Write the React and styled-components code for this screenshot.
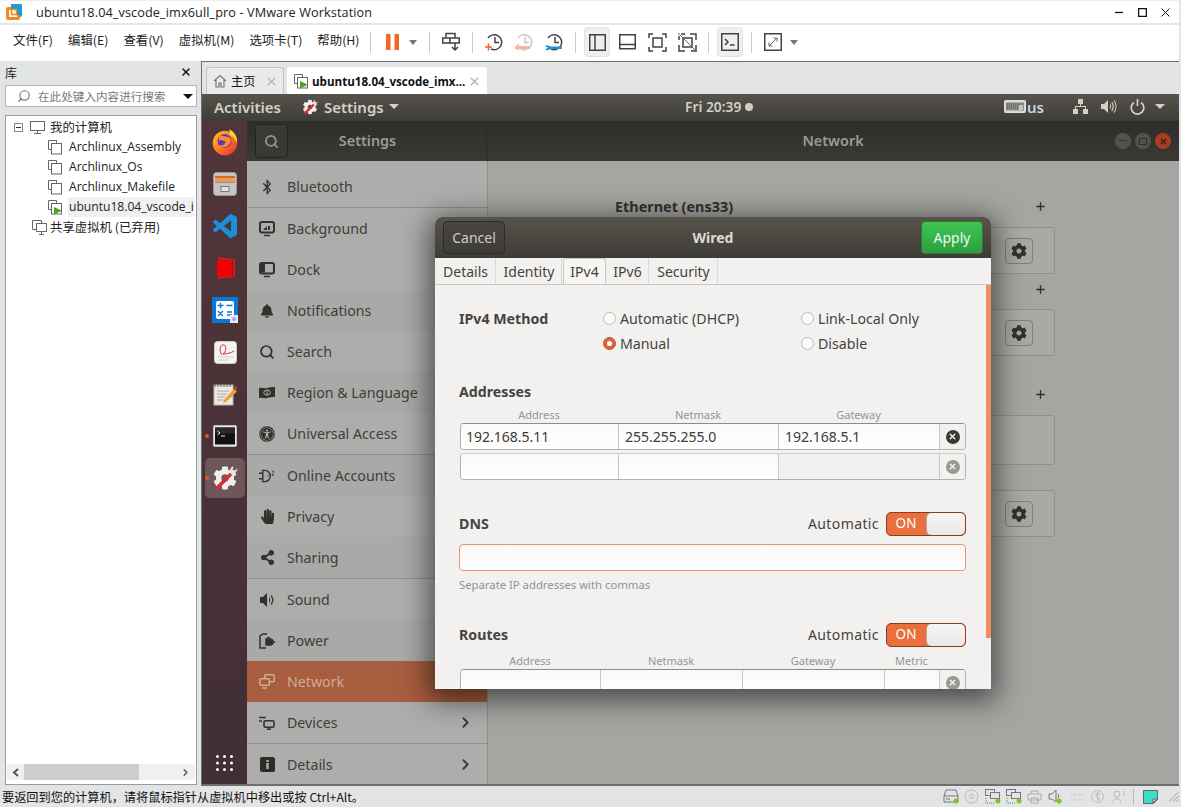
import React from "react";
import styled, { createGlobalStyle } from "styled-components";
import { FaBluetoothB, FaBell, FaHandPaper, FaShareAlt, FaUniversalAccess, FaCog } from "react-icons/fa";
import { ChevronRight, Search as SearchIcon, Plus, X } from "lucide-react";

const WIN = `"Open Sans", "Noto Sans CJK SC", sans-serif`;
const CJK = `"Noto Sans CJK SC", "Open Sans", sans-serif`;
const GTK = `"Noto Sans", "Open Sans", sans-serif`;

const Global = createGlobalStyle`
  html, body { margin: 0; padding: 0; background: #e3e4e6; overflow: hidden; }
  * { box-sizing: border-box; }
`;

const Page = styled.div`
  width: 1181px; height: 807px; display: flex; flex-direction: column;
  background: #e3e4e6; overflow: hidden; font-family: ${WIN}; color: #222;
`;
const TitleBar = styled.div`
  height: 25px; flex: none; display: flex; align-items: center; background: #fff;
  border-top: 1px solid #eee; border-bottom: 2px solid #e6e6e6; padding-left: 5px; margin-right: 2px;
`;
const TitleText = styled.div`
  margin-left: 13px; font-size: 12.7px; letter-spacing: .1px; color: #222; flex: 1; white-space: nowrap;
`;
const WinBtns = styled.div`
  display: flex; align-items: center; gap: 14px; padding-right: 9px;
`;
const Toolbar = styled.div`
  height: 36px; flex: none; display: flex; align-items: center; background: #fff; margin-right: 2px; padding-bottom: 2px;
`;
const Menu = styled.div`
  width: 370px; display: flex; padding: 0 0 4px 13px; gap: 15px;
  font-family: ${CJK}; font-size: 12.4px;
`;
const Sep = styled.div`
  width: 1px; height: 21px; background: #c9c9c9; flex: none;
`;
const ToolGroup = styled.div`
  width: ${p => p.$w}px; display: flex; align-items: center; padding-left: ${p => p.$pl ?? 6}px; flex: none;
`;
const Tool = styled.div`
  width: ${p => p.$w ?? 30}px; height: 30px; display: flex; align-items: center; justify-content: center; flex: none;
  position: relative;
  ${p => p.$on ? `&::before { content: ""; position: absolute; left: 2px; right: 2px; top: 0; bottom: 0; background: #efefef; border: 1px solid #e2e2e2; border-radius: 4px; }` : ""}
  svg { position: relative; }
`;
const Caret = styled.div`
  width: 0; height: 0; border-left: 4px solid transparent; border-right: 4px solid transparent;
  border-top: 5px solid ${p => p.$c ?? "#777"};
`;
const WideCaret = styled(Caret)`
  border-left-width: 5px; border-right-width: 5px;
`;
const Main = styled.div`
  flex: 1; display: flex; min-height: 0;
`;
const Side = styled.aside`
  width: 201px; flex: none; display: flex; flex-direction: column; padding: 0 4px 1px 5px;
`;
const SideHead = styled.div`
  height: 24px; flex: none; display: flex; align-items: center; justify-content: space-between;
  font-family: ${CJK}; font-size: 12px; padding: 0 5px 2px 0;
`;
const SearchBox = styled.div`
  height: 22px; flex: none; display: flex; align-items: center; background: #fff; border: 1px solid #b5b5b5;
  padding-left: 11px; font-family: ${CJK}; font-size: 11.6px; color: #7a7a7a; gap: 7px;
`;
const SearchCaret = styled(WideCaret)`
  margin-left: auto; margin-right: 3px;
`;
const FlippedSearch = styled(SearchIcon)`
  transform: scaleX(-1);
`;
const TreePanel = styled.div`
  flex: 1; margin-top: 8px; background: #fff; border: 1px solid #9a9a9a; display: flex; flex-direction: column;
  min-height: 0; padding: 1px;
`;
const Tree = styled.div`
  flex: 1;
`;
const TreeRow = styled.div`
  height: 20px; display: flex; align-items: center; padding-left: ${p => p.$indent}px; gap: ${p => p.$gap ?? 5}px; font-size: ${p => p.$cjk ? 12.4 : 12.1}px;
  font-family: ${p => p.$cjk ? CJK : WIN}; white-space: nowrap; overflow: hidden; color: #222;
`;
const TreeLabel = styled.span`
  background: ${p => p.$sel ? "#f0f0f0" : "transparent"}; height: 20px; line-height: 20px; padding-left: 1px;
  flex: ${p => p.$sel ? 1 : "none"}; overflow: hidden; margin-right: ${p => p.$sel ? "1px" : 0};
`;
const TreeGap = styled.span`
  width: ${p => p.$w}px; flex: none;
`;
const SharedLabel = styled.span`
  margin-left: -2px;
`;
const HScroll = styled.div`
  height: 16px; flex: none; margin: 0 0 3px 0; background: #f0f0f0; display: flex; align-items: center; padding: 0 4px;
`;
const Thumb = styled.div`
  width: 115px; height: 16px; background: #cdcdcd; margin: 0 auto 0 2px;
`;
const VmPane = styled.div`
  flex: 1; display: flex; flex-direction: column; min-width: 0; margin-right: 2px;
  border-top: 1px solid #6e6e6e; border-left: 1px solid #6e6e6e; border-bottom: 2px solid #6e6e6e;
`;
const Tabs = styled.div`
  height: 32px; flex: none; display: flex; align-items: flex-end; padding-left: 4px; gap: 3px; background: #e3e4e6;
`;
const VmTab = styled.div`
  height: 27px; width: ${p => p.$w}px; display: flex; align-items: center; padding: 0 5px 0 6px; gap: ${p => p.$active ? 3 : 4}px;
  background: ${p => p.$active ? "#fff" : "#e9eaec"}; border: 1px solid ${p => p.$active ? "#fff" : "#c2c2c2"}; border-bottom: 0;
  border-radius: 3px 3px 0 0; font-family: ${CJK}; font-size: 12.2px; white-space: nowrap; color: #111;
`;
const TabBold = styled.span`
  font-family: ${WIN}; font-weight: 700; font-size: 11.6px; flex: 1;
`;
const TabX = styled.span`
  margin-left: auto; display: flex; color: #b5b5b5;
`;
const Guest = styled.div`
  flex: 1; display: flex; flex-direction: column; position: relative; min-height: 0; font-family: ${GTK}; overflow: hidden;
`;
const TopBar = styled.div`
  height: 27px; flex: none; display: flex; align-items: center; padding: 0 14px 2px 12px; color: #d3d0c8;
  background: linear-gradient(#57534c, #3e3d38); font-size: 15px; font-weight: 600; position: relative;
`;
const TopLeft = styled.div`
  display: flex; align-items: center; flex: 1;
`;
const TopClock = styled.div`
  position: absolute; left: 483px; top: 0; height: 25px; display: flex; align-items: center; gap: 4px; font-size: 13.8px;
`;
const TopItem = styled.span`
  margin-left: ${p => p.$ml ?? 0}px; display: flex; align-items: center; color: ${p => p.$c ?? "inherit"};
`;
const Dot = styled.span`
  width: 8px; height: 8px; border-radius: 50%; background: #cfccc5;
`;
const Body = styled.div`
  flex: 1; display: flex; min-height: 0;
`;
const Dock = styled.div`
  width: 45px; flex: none; display: flex; flex-direction: column; align-items: center;
  background: linear-gradient(#503539, #412f35);
`;
const DockItem = styled.div`
  width: 40px; height: 42px; flex: none; display: flex; align-items: center; justify-content: center; position: relative;
  margin-left: 1px;
  ${p => p.$active ? "background: #6d575b; border-radius: 5px; height: 40px; margin: 1px 0 1px 1px;" : ""}
  ${p => p.$dot ? `&::before { content:""; position:absolute; left:0; top:50%; margin-top:-2px; width:4px; height:4px; border-radius:50%; background:#e0552b; }` : ""}
`;
const DockGrid = styled.div`
  margin-top: auto; height: 42px; display: flex; align-items: center; justify-content: center;
`;
const Win = styled.div`
  flex: 1; display: flex; flex-direction: column; min-width: 0;
`;
const Header = styled.div`
  height: 40px; flex: none; display: flex; align-items: center; background: linear-gradient(#2e2d29, #3a3935);
  color: #9c9b94; font-weight: 600; font-size: 14.4px;
`;
const HeadLeft = styled.div`
  width: 240px; height: 100%; flex: none; display: flex; align-items: center; padding-left: 8px; border-right: 1px solid #2a2926;
`;
const HeadBtn = styled.div`
  width: 33px; height: 34px; flex: none; border: 1px solid #242320; border-radius: 4px; display: flex; align-items: center; justify-content: center;
  background: #3a3935; color: #96958e;
`;
const HeadTitle = styled.div`
  flex: 1; text-align: center; padding: 0 ${p => p.$pr ?? 0}px 2px ${p => p.$pl ?? 0}px;
`;
const WinCtl = styled.div`
  display: flex; gap: 4px; padding-right: 8px; width: 64px; flex: none;
`;
const WinDot = styled.div`
  width: 16px; height: 16px; border-radius: 50%; background: ${p => p.$c}; display: flex; align-items: center; justify-content: center;
`;
const Panes = styled.div`
  flex: 1; display: flex; min-height: 0;
`;
const List = styled.div`
  width: 240px; flex: none; background: #adadab; padding-top: 5px; display: flex; flex-direction: column;
`;
const Row = styled.div`
  height: ${p => p.$sep ? 42 : 41}px; flex: none; display: flex; align-items: center; gap: 12px; padding: 0 13px 0 12px;
  background: ${p => p.$sel ? "#a85d3e" : p.$alt ? "#a9a9a7" : "#adadab"};
  color: ${p => p.$sel ? "#d0ab97" : "#3f3d39"}; font-size: 14.2px;
  ${p => p.$sep ? "border-bottom: 1px solid #8f8f8c;" : ""}
`;
const RowIcon = styled.span`
  width: 16px; height: 16px; flex: none; display: flex; align-items: center; justify-content: center; color: ${p => p.$c ?? "#33312e"};
`;
const RowChevron = styled.span`
  margin-left: auto; display: flex; color: #3a3835;
`;
const Content = styled.div`
  flex: 1; background: #a5a5a2; padding: 36px 124px 0 127px; border-left: 1px solid #8f8f8c; display: flex; flex-direction: column;
`;
const NetHead = styled.div`
  height: 20px; flex: none; display: flex; align-items: center; justify-content: space-between; color: #32312e;
  font-weight: 700; font-size: 14.4px; padding: 0 8px 2px 0; margin-top: ${p => p.$mt ?? 0}px;
`;
const NetBox = styled.div`
  height: ${p => p.$h ?? 47}px; flex: none; margin-top: ${p => p.$mt ?? 10}px; border: 1px solid #8f8f8c; border-radius: 3px; background: #a9a9a6;
  display: flex; align-items: center; justify-content: flex-end; padding-right: 21px;
`;
const GearBtn = styled.div`
  width: 28px; height: 26px; border: 1px solid #807f7c; border-radius: 4px; display: flex; align-items: center; justify-content: center;
  background: #a7a7a4; color: #33312e;
`;
const Dialog = styled.div`
  position: absolute; left: 233px; top: 123px; width: 556px; height: 472px; display: flex; flex-direction: column;
  border-radius: 7px 7px 0 0; overflow: hidden; background: #f2f1f0;
  box-shadow: 0 6px 28px 6px rgba(0,0,0,.55);
`;
const DlgHead = styled.div`
  height: 41px; flex: none; display: flex; align-items: center; justify-content: space-between; padding: 0 8px;
  background: linear-gradient(#57534c, #3e3c37); color: #dfdbd2;
`;
const DlgBtn = styled.div`
  width: 62px; height: 33px; border-radius: 4px; display: flex; align-items: center; justify-content: center; font-size: 14px;
  border: 1px solid ${p => p.$ok ? "#2a7a38" : "#2c2b27"};
  background: ${p => p.$ok ? "linear-gradient(#3cc653, #2f9d41)" : "linear-gradient(#4a4741, #3e3c37)"};
  color: ${p => p.$ok ? "#eef7ef" : "#cfccc4"};
`;
const DlgTitle = styled.div`font-weight: 700; font-size: 14px;`;
const DlgTabs = styled.div`
  height: 27px; flex: none; display: flex; align-items: stretch; padding: 0 0 0 1px; gap: 1px; border-bottom: 1px solid #cdc7c2; background: #f2f1f0;
`;
const DlgTab = styled.div`
  width: ${p => p.$w}px; display: flex; align-items: center; justify-content: center; font-size: 14px; color: #45433f;
  border-right: 1px solid #dcd8d4;
  ${p => p.$active ? "background:#f7f6f5; border:1px solid #cdc7c2; border-bottom:0; border-radius:4px 4px 0 0;" : ""}
`;
const DlgBody = styled.div`
  flex: 1; min-height: 0; position: relative; padding: 21px 25px 0 24px; overflow: hidden; color: #45433f; font-size: 14px;
`;
const ScrollMark = styled.div`
  position: absolute; right: 0; top: 0; width: 5px; height: 353px; background: #f08e63;
`;
const MethodRow = styled.div`
  display: flex;
`;
const SecLabel = styled.div`
  font-weight: 700; font-size: 14.2px; color: #45433f; width: ${p => p.$w ? p.$w + "px" : "auto"}; flex: none; height: ${p => p.$h ?? 25}px;
  display: flex; align-items: center; margin-top: ${p => p.$mt ?? 0}px; align-self: flex-start;
`;
const RadioGrid = styled.div`
  display: grid; grid-template-columns: 198px 1fr; grid-auto-rows: 25px;
`;
const RadioItem = styled.div`
  display: flex; align-items: center; gap: 4px; font-size: 14.2px;
`;
const RadioDot = styled.span`
  width: 13px; height: 13px; border-radius: 50%; flex: none; position: relative;
  background: ${p => p.$on ? "#e0643a" : "#fafafa"}; border: 1px solid ${p => p.$on ? "#b9502c" : "#bdb9b5"};
  ${p => p.$on ? `&::after{content:"";position:absolute;left:3px;top:3px;width:5px;height:5px;border-radius:50%;background:#fff;}` : ""}
`;
const ColHeads = styled.div`
  display: grid; grid-template-columns: ${p => p.$cols}; height: 15px; margin-top: ${p => p.$mt ?? 6}px; padding-left: 1px;
  font-size: 11px; color: #8d979f; text-align: center; line-height: 15px;
`;
const Grid = styled.div`
  display: grid; grid-template-columns: ${p => p.$cols}; height: 27px; margin-top: ${p => p.$mt ?? 0}px; background: #fff;
  border: 1px solid #b4b0ac; border-top-color: ${p => p.$dim ? "#cfcbc7" : "#8f8c88"}; border-radius: 4px; overflow: hidden; margin-left: 1px;
`;
const Cell = styled.div`
  border-right: 1px solid #c9c5c1; padding-left: 6px; display: flex; align-items: center; font-size: 14px; color: #3d3b37;
  background: ${p => p.$off ? "#f2f1f0" : "linear-gradient(#f9f9f9,#fff)"};
  &:first-child { padding-left: 5px; }
  &:last-child { border-right: 0; padding: 0; justify-content: center; background: #f2f1f0; }
`;
const ClearDot = styled.span`
  width: 14px; height: 14px; border-radius: 50%; background: ${p => p.$dim ? "#9a9895" : "#3a3835"}; color: #f2f1f0; display: flex; align-items: center; justify-content: center;
`;
const SwitchRow = styled.div`
  height: 24px; display: flex; align-items: center; margin-top: ${p => p.$mt}px;
`;
const AutoLabel = styled.span`
  margin-left: auto; margin-right: 7px; font-size: 14px; letter-spacing: .4px; padding-bottom: 2px;
`;
const Switch = styled.div`
  width: 80px; height: 24px; flex: none; border-radius: 5px; border: 1px solid #8a3d20; background: #e9703c; display: flex; color: #fff; overflow: hidden;
`;
const SwitchOn = styled.span`
  flex: 1; text-align: center; line-height: 21px; font-size: 13.5px; padding-right: 1px;
`;
const Knob = styled.span`
  width: 39px; background: linear-gradient(#f6f6f5,#e9e8e6); border-radius: 5px; border-left: 1px solid #b8a79c;
`;
const Entry = styled.div`
  height: 27px; margin-top: 8px; border: 1px solid #ea9474; border-radius: 4px; background: linear-gradient(#f8f8f8,#fff);
`;
const Helper = styled.div`
  margin-top: 7px; height: 14px; line-height: 14px; font-size: 11.3px; color: #8a949c;
`;
const StatusBar = styled.footer`
  height: 21px; flex: none; display: flex; align-items: center; padding: 0 2px 0 2px; font-family: ${CJK}; font-size: 12.2px; color: #111;
  white-space: nowrap;
`;
const StatusIcons = styled.div`
  margin-left: auto; display: flex; align-items: center; height: 100%;
`;
const StatusIcon = styled.span`
  width: 21px; display: flex; justify-content: center; flex: none;
`;
const StatusSep = styled.span`
  width: 1px; height: 16px; background: #bbb; margin: 0 9px 0 4px; flex: none;
`;
const StatusGap = styled.span`
  width: 10px; flex: none;
`;

/* ---------- drawings ---------- */
const VmIcon = ({ play }) => (
  <svg width="15" height="15" viewBox="0 0 15 15" fill="none" stroke="#666" style={{ flex: "none" }}>
    <path d="M.5 .5h8v2.5M.5 .5v9h2.5" />
    <rect x="3.5" y="3.5" width="10" height="10.5" fill="#fff" />
    {play && <path d="M6 7v7.5l8-3.7z" fill="#4da51c" stroke="none" />}
  </svg>
);
const Logo = () => (
  <svg width="18" height="18" viewBox="0 0 18 18">
    <path d="M6 1h10a1 1 0 0 1 1 1v10a2 2 0 0 1-2 2h-3v-8H6z" fill="#1e9ad6" />
    <path d="M1 6a2 2 0 0 1 2-2h3v3H4v7h8v-2h3v3a2 2 0 0 1-2 2H3a2 2 0 0 1-2-2z" fill="#f08a1d" />
    <rect x="6.5" y="6.5" width="5" height="5" fill="none" stroke="#f08a1d" strokeWidth="1.6" />
  </svg>
);
const Stroke = styled.svg`fill: none; stroke: ${p => p.$c ?? "#3f4246"}; stroke-width: 1.5;`;
const SendKeys = () => (
  <Stroke width="18" height="20" viewBox="0 0 18 20">
    <path d="M4 6V1.5h9V6M.75 6h16.5v5H.75zM8 6v5" /><path d="M13 11v6M10 15l3 3 3-3" />
  </Stroke>
);
const Clock = ({ c = "#3f4246", children }) => (
  <Stroke width="20" height="20" viewBox="0 0 20 20" $c={c}>
    <path d="M4 6a7.5 7.5 0 1 1 3 11" /><path d="M11 5v5.5h4" />{children}
  </Stroke>
);
const SnapTake = () => <Clock><path d="M1 15h7M4.5 11.5v7" stroke="#f0611e" /></Clock>;
const SnapBack = () => (
  <Clock c="#c9c9c9"><path d="M1 14h15v3H1z" fill="#f8b699" stroke="none" /><path d="M5 11l-4 4.5 4 3.5z" fill="#f8b699" stroke="none" /></Clock>
);
const SnapMgr = () => (
  <Clock><path d="M1 14c3-2 4 .5 6 .5h11v2.5H7c-2 0-3 2.5-6 .5l3-1.7z" fill="#1c93d6" stroke="none" /></Clock>
);
const ViewLib = () => <Stroke width="17" height="17" viewBox="0 0 17 17"><rect x=".75" y=".75" width="15.5" height="15.5" /><path d="M6 1v15" /></Stroke>;
const ViewThumb = () => <Stroke width="17" height="17" viewBox="0 0 17 17"><rect x=".75" y=".75" width="15.5" height="14" /><path d="M1 10.5h15" /></Stroke>;
const ViewFull = () => (
  <Stroke width="19" height="19" viewBox="0 0 19 19"><path d="M1 5V1h4M14 1h4v4M18 14v4h-4M5 18H1v-4" /><rect x="5" y="5" width="9" height="9" /></Stroke>
);
const ViewOff = () => (
  <Stroke width="19" height="19" viewBox="0 0 19 19"><path d="M3 1h4M12 1h6v6M18 12v6h-5M7 18H1v-6M1 7V3" /><rect x="5" y="5" width="9" height="9" /><path d="M0 0l19 19" stroke="#666" strokeWidth="1" /></Stroke>
);
const Term = () => (
  <Stroke width="18" height="18" viewBox="0 0 18 18"><rect x=".75" y=".75" width="16.5" height="16.5" /><path d="M4 6l3 3-3 3M9 12h4.5" /></Stroke>
);
const Stretch = () => (
  <Stroke width="18" height="18" viewBox="0 0 18 18"><rect x=".75" y=".75" width="16.5" height="16.5" /><path d="M5 13l8-8M9.5 5H13v3.5M5 9.5V13h3.5" strokeWidth="1" stroke="#666" /></Stroke>
);
const Monitor = () => (
  <svg width="15" height="13" viewBox="0 0 15 13" fill="none" stroke="#666"><rect x=".5" y=".5" width="14" height="9" /><path d="M4 12.5h7M7.5 10v2" /></svg>
);
const Minus = () => (
  <svg width="9" height="9" viewBox="0 0 9 9" fill="#fff" stroke="#888"><rect x=".5" y=".5" width="8" height="8" /><path d="M2 4.5h5" stroke="#333" /></svg>
);
const Shared = () => (
  <svg width="15" height="15" viewBox="0 0 15 15" fill="#fff" stroke="#666"><path d="M.5 .5h9v9h-9z" /><path d="M4.5 3.5h10v8h-10zM9.5 11.5v3M7 14.5h5" /></svg>
);
const ChevronLeftSmall = () => (
  <svg width="11" height="11" viewBox="0 0 11 11" fill="none" stroke="#555" strokeWidth="2"><path d="M7 2L3 5.5 7 9" /></svg>
);

const Firefox = () => (
  <svg width="28" height="28" viewBox="0 0 28 28">
    <defs><linearGradient id="ff" x1="0" y1="0" x2="1" y2="1"><stop offset="0" stopColor="#ffc827" /><stop offset=".5" stopColor="#ff7a1d" /><stop offset="1" stopColor="#e4233f" /></linearGradient></defs>
    <circle cx="14" cy="15" r="12.3" fill="url(#ff)" />
    <path d="M18 1c6 3 9 9 8 14-2-5-5-8-8-8 1-2 1-4 0-6z" fill="#ffd42a" />
    <circle cx="13.5" cy="13" r="7" fill="#5a3cc0" />
    <path d="M8 7c3 1 8 1 11 3 2 3 0 7-4 9-3 1-7 0-9-2 3 1 7 1 8-2-3 0-6-1-6-4z" fill="#ff8a2a" />
    <path d="M9 12c2 1 5 .5 6 2-1 1-4 1-6 0z" fill="#4b2fb0" />
  </svg>
);
const Files = () => (
  <svg width="24" height="24" viewBox="0 0 24 24">
    <rect x=".5" y=".5" width="23" height="23" rx="3" fill="#c9c6c1" stroke="#9c9a96" />
    <rect x="2" y="4" width="20" height="6" fill="#f19a58" /><rect x="2" y="4" width="20" height="2" fill="#c86d30" />
    <rect x="2" y="10" width="20" height="1" fill="#8f8d8a" />
    <rect x="8" y="14.5" width="8" height="5" fill="#e7e5e2" stroke="#777" />
  </svg>
);
const VSCode = () => (
  <svg width="24" height="24" viewBox="0 0 24 24">
    <path fill="#1a8fdb" d="M23.15 2.587L18.21.21a1.494 1.494 0 0 0-1.705.29l-9.46 8.63-4.12-3.128a.999.999 0 0 0-1.276.057L.327 7.261A1 1 0 0 0 .326 8.74L3.899 12 .326 15.26a1 1 0 0 0 .001 1.479L1.65 17.94a.999.999 0 0 0 1.276.057l4.12-3.128 9.46 8.63a1.492 1.492 0 0 0 1.704.29l4.942-2.377A1.5 1.5 0 0 0 24 20.06V3.939a1.5 1.5 0 0 0-.85-1.352zm-5.146 14.861L10.826 12l7.178-5.448v10.896z" />
  </svg>
);
const RedBox = () => (
  <svg width="22" height="24" viewBox="0 0 22 24">
    <path d="M3 1l18 2.500v17L3 23l2-2.500 14-.5V5L5 4z" fill="#e01414" />
    <rect x="3" y="4.5" width="15" height="15.500" fill="#f40000" />
  </svg>
);
const Calc = () => (
  <svg width="26" height="26" viewBox="0 0 26 26" stroke="#0a78d7" strokeWidth="1.3">
    <rect width="26" height="26" fill="#0a78d7" stroke="none" />
    <rect x="4" y="4" width="18" height="18" rx="2" fill="#fff" stroke="none" />
    <path d="M5.5 8.5h6M8.5 5.5v6M14.5 8.5h6M6 14l5 5M11 14l-5 5M15 15h5M15 18h5" />
    <rect x="18" y="18" width="8" height="8" fill="#e8ecf4" stroke="none" />
    <path d="M22 19.5l2.5 2.5-2.5 2.5-2.5-2.5z" fill="#c696dd" stroke="none" />
  </svg>
);
const Ebook = () => (
  <svg width="23" height="23" viewBox="0 0 23 23" fill="none">
    <rect x=".5" y=".5" width="22" height="22" rx="3" fill="#f4f3f1" stroke="#ccc" />
    <path d="M8 14C4 8 7 3 10 4c3 1 2 7-1 9 4 0 8-1 11-3" stroke="#d5322a" />
    <path d="M4 16h15M4 19h11" stroke="#ccc" />
  </svg>
);
const Note = () => (
  <svg width="25" height="25" viewBox="0 0 25 25" fill="none">
    <rect x="1" y="3" width="19" height="20" fill="#eceadf" stroke="#b9b7ac" />
    <path d="M2 2v3M5 2v3M8 2v3M11 2v3M14 2v3M17 2v3" stroke="#555" />
    <path d="M4 9h12M4 12h10M4 15h8M4 18h6" stroke="#aaa" />
    <path d="M11 18l10-11 3 2.5L13 20l-3 .8z" fill="#f09a2a" /><path d="M21 6l2-2 1.5 1.5L23 8z" fill="#d8382a" />
  </svg>
);
const TermApp = () => (
  <svg width="24" height="22" viewBox="0 0 24 22" fill="none">
    <rect x=".5" y=".5" width="23" height="21" rx="1" fill="#e8e8e6" stroke="#bbb" />
    <rect x="2" y="2.5" width="20" height="17" fill="#111" /><rect x="2" y="2.5" width="20" height="6" fill="#2a2a2a" />
    <path d="M4.5 6l2.5 2-2.5 2M8 11h4" stroke="#e8e8e8" />
  </svg>
);
const Tune = ({ s = 26 }) => (
  <svg width={s} height={s} viewBox="0 0 26 26">
    <FaCog x="1" y="1" size={24} color="#efeeec" />
    <path d="M3 22.5L18 7.5l2.5 2.5L5.5 25z" fill="#d8302c" />
    <path d="M17 6l3-4.5 1.5.5-1 3 3 .5 1-2 1 1.5-3 4-3 .5z" fill="#e4e2de" />
  </svg>
);
const Apps = () => (
  <svg width="17" height="16" viewBox="0 0 17 16" fill="#fff">
    {[1.5, 8.5, 15.5].flatMap(x => [1.5, 8, 14.5].map(y => <circle key={x + "-" + y} cx={x} cy={y} r="1.5" />))}
  </svg>
);
const IcBg = () => (
  <svg width="16" height="16" viewBox="0 0 16 16"><rect x="1" y="1" width="14" height="10.5" rx="2" fill="none" stroke="#33312e" strokeWidth="2" /><path d="M4 9l4-4v4z M9 5h2v4H9z" fill="#33312e" /><path d="M5 14.5h6" stroke="#33312e" strokeWidth="1.5" /></svg>
);
const IcDock = () => (
  <svg width="16" height="16" viewBox="0 0 16 16"><rect x="1" y="1" width="14" height="10.5" rx="2" fill="none" stroke="#33312e" strokeWidth="2" /><rect x="2" y="2" width="4" height="8.5" fill="#33312e" /><path d="M5 14.5h6" stroke="#33312e" strokeWidth="1.5" /></svg>
);
const IcRegion = () => (
  <svg width="16" height="14" viewBox="0 0 16 14"><path d="M0 2c3-1 5 1 8 0s5-1 8-1v10c-3 0-5 0-8 1s-5-1-8 0z" fill="#33312e" /><ellipse cx="8" cy="6.5" rx="3.2" ry="2.6" fill="none" stroke="#adadab" /><path d="M8 4v5" stroke="#adadab" /></svg>
);
const IcOnline = () => (
  <svg width="17" height="16" viewBox="0 0 17 16" fill="none" stroke="#33312e" strokeWidth="1.5"><path d="M0 5h4M0 11h4M4 2v12h2a5 5 0 0 0 0-12z" /><path d="M10 8h-1" /><path d="M14 3c2-1 2 1 .6 2.5S14 8 16 7" strokeWidth="1" /></svg>
);
const IcSearch = () => <SearchIcon size={16} strokeWidth={2.6} />;
const IcSound = () => (
  <svg width="15" height="14" viewBox="0 0 15 14" fill="#33312e"><path d="M0 4h3l4-4v14l-4-4H0z" /><path d="M9 4c1.5 1.5 1.5 4.5 0 6zM11.5 2c2.5 3 2.5 7 0 10l-.8-1c1.8-2.5 1.8-5.5 0-8z" /></svg>
);
const IcPower = () => (
  <svg width="16" height="16" viewBox="0 0 16 16" fill="none" stroke="#33312e" strokeWidth="1.5"><path d="M7 15H1V3l3-2h4" /><path d="M8 4.5h3" strokeWidth="1" /><path d="M7 6h4a3 3 0 0 1 0 6H7z" fill="#33312e" /><path d="M14 9h2" /></svg>
);
const IcNet = ({ c = "#d0ab97" }) => (
  <svg width="16" height="15" viewBox="0 0 16 15" fill="none" stroke={c} strokeWidth="1.5"><rect x="5.7" y=".8" width="9.5" height="7" rx="1" /><rect x=".8" y="4.8" width="9.5" height="6.5" rx="1" fill="#a85d3e" /><path d="M3 14h5" /></svg>
);
const IcDevices = () => (
  <svg width="16" height="14" viewBox="0 0 16 14" fill="none" stroke="#33312e" strokeWidth="1.6"><path d="M0 1.5h7M0 5h3" /><rect x="5" y="4.8" width="10" height="6.5" rx="1.5" /><path d="M8 13.2h4" /></svg>
);
const IcInfo = () => (
  <svg width="15" height="15" viewBox="0 0 15 15"><rect width="15" height="15" rx="2" fill="#2e2c29" /><path d="M6.3 6h2.4v6H6.3zM6.3 3h2.4v2H6.3z" fill="#adadab" /></svg>
);

const StatIc = styled.svg`fill: none; stroke: ${p => p.$c ?? "#777"};`;
const Led = () => <circle cx="13" cy="12" r="2.5" fill="#7fc31c" stroke="none" />;
const Hdd = () => <StatIc width="16" height="15" viewBox="0 0 16 15"><path d="M3 1h10l2 6v6H1V7zM1 7h14M3 10h4" /><Led /></StatIc>;
const Cd = () => <StatIc $c="#bbb" width="15" height="15" viewBox="0 0 15 15"><circle cx="7.5" cy="7.5" r="6.5" /><circle cx="7.5" cy="7.5" r="2" /></StatIc>;
const Net = () => <StatIc width="16" height="15" viewBox="0 0 16 15"><rect x=".5" y=".5" width="9" height="6" /><rect x="5.5" y="3.5" width="9" height="6" fill="#e3e4e6" /><path d="M1 9v5h8" strokeDasharray="1 1" /><Led /></StatIc>;
const Printer = () => <StatIc $c="#aaa" width="15" height="14" viewBox="0 0 15 14"><path d="M4 4V1h7v3M1 4h13v6H1zM4 8h7v5H4z" /></StatIc>;
const Speaker = () => <StatIc width="15" height="15" viewBox="0 0 15 15"><path d="M1 5h3l4-4v12l-4-3H1zM10 5c1 1 1 3 0 4" /><circle cx="11" cy="12" r="2.5" fill="#7fc31c" stroke="none" /></StatIc>;
const Usb = () => <StatIc $c="#bbb" width="14" height="12" viewBox="0 0 14 12"><path d="M1 5c3-3 9-3 12 0M1 9h12M4 4l1 2M10 4L9 6" strokeDasharray="1 1" /></StatIc>;
const Bt = () => <StatIc $c="#bbb" width="13" height="15" viewBox="0 0 13 15"><circle cx="6.5" cy="7.5" r="6" /><path d="M6.5 3v9l2-2-4-5 4-0z" /></StatIc>;
const User = () => <StatIc $c="#bbb" width="14" height="14" viewBox="0 0 14 14"><circle cx="5" cy="4" r="3" /><path d="M1 13c0-6 8-6 8 0M12 1v5" /></StatIc>;
const NoteIc = () => (
  <svg width="15" height="14" viewBox="0 0 15 14"><path d="M.5.5h14v9l-4 4h-10z" fill="#3bdcc8" stroke="#666" /><path d="M14 9h-4v4z" fill="#e3e4e6" stroke="#666" /></svg>
);
const Grip = () => (
  <svg width="11" height="11" viewBox="0 0 11 11" stroke="#999"><path d="M10.5 1L1 10.5M10.5 5L5 10.5M10.5 8.5L8.5 10.5" /></svg>
);
const Keyboard = () => (
  <svg width="22" height="14" viewBox="0 0 22 14"><rect x=".5" y=".5" width="21" height="12" rx="1" fill="#d8d6d0" stroke="#e4e2dc" /><rect x="2" y="2.5" width="18" height="8" fill="#8c8a86" /><path d="M3 4h16M3 6h11M3 8h11" stroke="#5d5a55" strokeDasharray="1 1" /><rect x="15" y="5" width="4" height="5" fill="#c8c6c2" /></svg>
);
const TopNet = () => (
  <svg width="15" height="15" viewBox="0 0 15 15" fill="#d3d0c8"><rect x="5" y="0" width="5" height="5" /><rect x="0" y="10" width="5" height="5" /><rect x="10" y="10" width="5" height="5" /><path d="M7 5h1v2h5v3h-1V8H3v2H2V7h5z" /></svg>
);
const TopVol = () => (
  <svg width="16" height="15" viewBox="0 0 16 15" fill="#d3d0c8"><path d="M0 5h3l4-4v13l-4-4H0z" /><path d="M9 4c1.5 2 1.5 5 0 7zM11 2.5c2.5 3 2.5 7 0 10l-.6-1c1.7-2.5 1.7-5.5 0-8zM13.3 1c3 4 3 9 0 13l-.6-.8c2.5-3.7 2.5-7.7 0-11.4z" /></svg>
);
const TopPower = () => (
  <svg width="15" height="16" viewBox="0 0 15 16" fill="none" stroke="#d3d0c8" strokeWidth="1.7"><path d="M4 3.5a6.3 6.3 0 1 0 7 0M7.5 0v7" /></svg>
);

const settings = [
  { t: "Bluetooth", i: <FaBluetoothB size={16} />, sep: true },
  { t: "Background", i: <IcBg />, alt: 0 },
  { t: "Dock", i: <IcDock />, alt: 0 },
  { t: "Notifications", i: <FaBell size={14} />, alt: 1 },
  { t: "Search", i: <IcSearch /> },
  { t: "Region & Language", i: <IcRegion />, alt: 1 },
  { t: "Universal Access", i: <FaUniversalAccess size={16} />, sep: true },
  { t: "Online Accounts", i: <IcOnline />, alt: 1 },
  { t: "Privacy", i: <FaHandPaper size={15} /> },
  { t: "Sharing", i: <FaShareAlt size={15} />, sep: true, alt: 1 },
  { t: "Sound", i: <IcSound /> },
  { t: "Power", i: <IcPower />, alt: 1 },
  { t: "Network", i: <IcNet />, sel: true },
  { t: "Devices", i: <IcDevices />, sep: true, chev: true },
  { t: "Details", i: <IcInfo />, chev: true },
];
const ADDR = "158px 160px 161px 1fr";
const ROUTE = "140px 142px 142px 55px 1fr";
const Cross = ({ s = 9 }) => <X size={s} strokeWidth={4} />;
const GearIcon = () => <FaCog size={16} />;

export default function App() {
  return (
    <Page>
      <Global />
      <TitleBar>
        <Logo />
        <TitleText>ubuntu18.04_vscode_imx6ull_pro - VMware Workstation</TitleText>
        <WinBtns>
          <svg width="9" height="9" viewBox="0 0 9 9" stroke="#111"><path d="M0 4.5h8" strokeWidth="1.3" /></svg>
          <svg width="9" height="9" viewBox="0 0 9 9" fill="none" stroke="#111" strokeWidth="1.3"><rect x=".6" y=".6" width="7.8" height="7.8" /></svg>
          <svg width="9" height="9" viewBox="0 0 9 9" stroke="#111"><path d="M.5.5l8 8M8.5.5l-8 8" /></svg>
        </WinBtns>
      </TitleBar>
      <Toolbar>
        <Menu>
          {["文件(F)", "编辑(E)", "查看(V)", "虚拟机(M)", "选项卡(T)", "帮助(H)"].map(m => <span key={m}>{m}</span>)}
        </Menu>
        <Sep />
        <ToolGroup $w={58}>
          <Tool><svg width="13" height="16" viewBox="0 0 13 16" fill="#f26522"><rect width="4.5" height="16" /><rect x="8.5" width="4.5" height="16" /></svg></Tool>
          <Tool $w={12}><Caret /></Tool>
        </ToolGroup>
        <Sep />
        <ToolGroup $w={42} $pl={0}><Tool $w={42}><SendKeys /></Tool></ToolGroup>
        <Sep />
        <ToolGroup $w={102}><Tool><SnapTake /></Tool><Tool><SnapBack /></Tool><Tool><SnapMgr /></Tool></ToolGroup>
        <Sep />
        <ToolGroup $w={132}><Tool $on><ViewLib /></Tool><Tool><ViewThumb /></Tool><Tool><ViewFull /></Tool><Tool><ViewOff /></Tool></ToolGroup>
        <Sep />
        <ToolGroup $w={42}><Tool $on><Term /></Tool></ToolGroup>
        <Sep />
        <ToolGroup $w={60}><Tool><Stretch /></Tool><Tool $w={12}><Caret /></Tool></ToolGroup>
      </Toolbar>
      <Main>
        <Side>
          <SideHead>库<X size={12} strokeWidth={3} color="#111" /></SideHead>
          <SearchBox>
            <FlippedSearch size={14} color="#777" />
            在此处键入内容进行搜索
            <SearchCaret $c="#111" />
          </SearchBox>
          <TreePanel>
            <Tree>
              <TreeRow $indent={7} $cjk $gap={0}>
                <Minus /><TreeGap $w={7} /><Monitor /><TreeGap $w={5} />我的计算机
              </TreeRow>
              {["Archlinux_Assembly", "Archlinux_Os", "Archlinux_Makefile"].map(n => (
                <TreeRow key={n} $indent={41}><VmIcon /><TreeLabel>{n}</TreeLabel></TreeRow>
              ))}
              <TreeRow $indent={41}><VmIcon play /><TreeLabel $sel>ubuntu18.04_vscode_imx6ull_pro</TreeLabel></TreeRow>
              <TreeRow $indent={25} $cjk><Shared /><SharedLabel>共享虚拟机 (已弃用)</SharedLabel></TreeRow>
            </Tree>
            <HScroll>
              <ChevronLeftSmall />
              <Thumb />
              <ChevronRight size={11} strokeWidth={3} color="#555" />
            </HScroll>
          </TreePanel>
        </Side>
        <VmPane>
          <Tabs>
            <VmTab $w={78}>
              <svg width="14" height="14" viewBox="0 0 14 14" fill="none" stroke="#777" strokeWidth="1.2"><path d="M1 7l6-5.5L13 7M3 6v7h3V9h2v4h3V6" /></svg>
              主页
              <TabX><X size={13} strokeWidth={2.5} /></TabX>
            </VmTab>
            <VmTab $w={200} $active>
              <VmIcon play />
              <TabBold>ubuntu18.04_vscode_imx...</TabBold>
              <TabX><X size={13} strokeWidth={2.5} /></TabX>
            </VmTab>
          </Tabs>
          <Guest>
            <TopBar>
              <TopLeft>
                <span>Activities</span>
                <TopItem $ml={21}><Tune s={16} /></TopItem>
                <TopItem $ml={6}>Settings</TopItem>
                <TopItem $ml={5}><WideCaret $c="#d3d0c8" /></TopItem>
              </TopLeft>
              <TopClock>Fri 20:39 <Dot /></TopClock>
              <Keyboard />
              <TopItem $ml={1} $c="#c8d4e4">us</TopItem>
              <TopItem $ml={29}><TopNet /></TopItem>
              <TopItem $ml={13}><TopVol /></TopItem>
              <TopItem $ml={13}><TopPower /></TopItem>
              <TopItem $ml={10}><WideCaret $c="#d3d0c8" /></TopItem>
            </TopBar>
            <Body>
              <Dock>
                <DockItem><Firefox /></DockItem>
                <DockItem><Files /></DockItem>
                <DockItem><VSCode /></DockItem>
                <DockItem><RedBox /></DockItem>
                <DockItem><Calc /></DockItem>
                <DockItem><Ebook /></DockItem>
                <DockItem><Note /></DockItem>
                <DockItem $dot><TermApp /></DockItem>
                <DockItem $dot $active><Tune /></DockItem>
                <DockGrid><Apps /></DockGrid>
              </Dock>
              <Win>
                <Header>
                  <HeadLeft>
                    <HeadBtn><SearchIcon size={15} strokeWidth={2.8} /></HeadBtn>
                    <HeadTitle $pr={39}>Settings</HeadTitle>
                  </HeadLeft>
                  <HeadTitle $pl={64}>Network</HeadTitle>
                  <WinCtl>
                    <WinDot $c="#53524e"><svg width="8" height="2"><rect width="8" height="1" fill="#2f2e2a" /></svg></WinDot>
                    <WinDot $c="#53524e"><svg width="8" height="7" fill="none" stroke="#2f2e2a"><rect x=".5" y=".5" width="7" height="6" /></svg></WinDot>
                    <WinDot $c="#a73d22"><X size={9} strokeWidth={3} color="#3a1a10" /></WinDot>
                  </WinCtl>
                </Header>
                <Panes>
                  <List>
                    {settings.map(s => (
                      <Row key={s.t} $sep={s.sep} $sel={s.sel} $alt={s.alt}>
                        <RowIcon>{s.i}</RowIcon>
                        <span>{s.t}</span>
                        {s.chev && <RowChevron><ChevronRight size={17} strokeWidth={2.5} /></RowChevron>}
                      </Row>
                    ))}
                  </List>
                  <Content>
                    <NetHead>Ethernet (ens33)<Plus size={13} strokeWidth={2.5} /></NetHead>
                    <NetBox><GearBtn><GearIcon /></GearBtn></NetBox>
                    <NetHead $mt={6}><span /><Plus size={13} strokeWidth={2.5} /></NetHead>
                    <NetBox $mt={9}><GearBtn><GearIcon /></GearBtn></NetBox>
                    <NetHead $mt={29}><span /><Plus size={13} strokeWidth={2.5} /></NetHead>
                    <NetBox $h={50} />
                    <NetBox $mt={25}><GearBtn><GearIcon /></GearBtn></NetBox>
                  </Content>
                </Panes>
              </Win>
            </Body>
            <Dialog>
              <DlgHead>
                <DlgBtn>Cancel</DlgBtn>
                <DlgTitle>Wired</DlgTitle>
                <DlgBtn $ok>Apply</DlgBtn>
              </DlgHead>
              <DlgTabs>
                <DlgTab $w={60}>Details</DlgTab>
                <DlgTab $w={65}>Identity</DlgTab>
                <DlgTab $w={43} $active>IPv4</DlgTab>
                <DlgTab $w={42}>IPv6</DlgTab>
                <DlgTab $w={68}>Security</DlgTab>
              </DlgTabs>
              <DlgBody>
                <ScrollMark />
                <MethodRow>
                  <SecLabel $w={144}>IPv4 Method</SecLabel>
                  <RadioGrid>
                    <RadioItem><RadioDot />Automatic (DHCP)</RadioItem>
                    <RadioItem><RadioDot />Link-Local Only</RadioItem>
                    <RadioItem><RadioDot $on />Manual</RadioItem>
                    <RadioItem><RadioDot />Disable</RadioItem>
                  </RadioGrid>
                </MethodRow>
                <SecLabel $h={20} $mt={25}>Addresses</SecLabel>
                <ColHeads $cols={ADDR}><span>Address</span><span>Netmask</span><span>Gateway</span></ColHeads>
                <Grid $cols={ADDR} $mt={1}>
                  <Cell>192.168.5.11</Cell><Cell>255.255.255.0</Cell><Cell>192.168.5.1</Cell>
                  <Cell><ClearDot><Cross /></ClearDot></Cell>
                </Grid>
                <Grid $cols={ADDR} $mt={3} $dim>
                  <Cell /><Cell /><Cell $off />
                  <Cell><ClearDot $dim><Cross /></ClearDot></Cell>
                </Grid>
                <SwitchRow $mt={32}><SecLabel $h={22}>DNS</SecLabel><AutoLabel>Automatic</AutoLabel><Switch><SwitchOn>ON</SwitchOn><Knob /></Switch></SwitchRow>
                <Entry />
                <Helper>Separate IP addresses with commas</Helper>
                <SwitchRow $mt={31}><SecLabel $h={22}>Routes</SecLabel><AutoLabel>Automatic</AutoLabel><Switch><SwitchOn>ON</SwitchOn><Knob /></Switch></SwitchRow>
                <ColHeads $cols={ROUTE} $mt={6}><span>Address</span><span>Netmask</span><span>Gateway</span><span>Metric</span></ColHeads>
                <Grid $cols={ROUTE} $mt={1}>
                  <Cell /><Cell /><Cell /><Cell />
                  <Cell><ClearDot $dim><Cross /></ClearDot></Cell>
                </Grid>
              </DlgBody>
            </Dialog>
          </Guest>
        </VmPane>
      </Main>
      <StatusBar>
        要返回到您的计算机，请将鼠标指针从虚拟机中移出或按 Ctrl+Alt。
        <StatusIcons>
          <StatusIcon><Hdd /></StatusIcon>
          <StatusIcon><Cd /></StatusIcon>
          <StatusIcon><Net /></StatusIcon>
          <StatusIcon><Net /></StatusIcon>
          <StatusIcon><Printer /></StatusIcon>
          <StatusIcon><Speaker /></StatusIcon>
          <StatusIcon><Usb /></StatusIcon>
          <StatusIcon><Bt /></StatusIcon>
          <StatusIcon><User /></StatusIcon>
          <StatusSep />
          <NoteIc />
          <StatusGap />
          <Grip />
        </StatusIcons>
      </StatusBar>
    </Page>
  );
}
